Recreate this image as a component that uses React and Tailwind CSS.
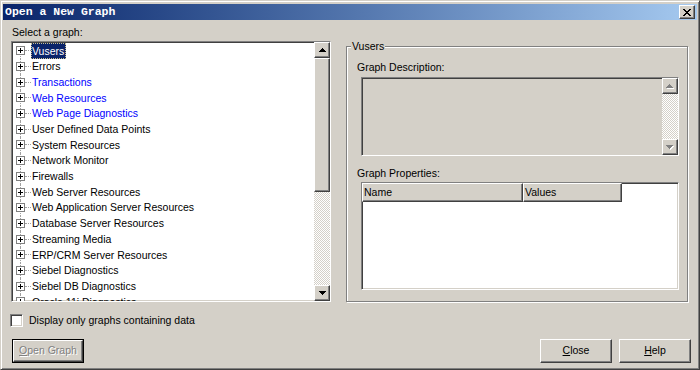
import React from "react";

const raised =
  "border border-t-white border-l-white border-r-[#404040] border-b-[#404040] shadow-[inset_-1px_-1px_0_#808080]";
const sunken =
  "border border-t-[#808080] border-l-[#808080] border-r-white border-b-white shadow-[inset_1px_1px_0_#404040,inset_-1px_-1px_0_#d4d0c8]";
const checker =
  "bg-[repeating-conic-gradient(#ffffff_0%_25%,#d4d0c8_0%_50%)] bg-[length:2px_2px]";

const UP = "M3 0h1v1h1v1h1v1h1v1H0V3h1V2h1V1h1z";
const DOWN = "M0 0h7v1H6v1H5v1H4v1H3V3H2V2H1V1H0z";

function Arrow({ dir, disabled }) {
  const d = dir === "up" ? UP : DOWN;
  if (disabled) {
    return (
      <svg width="8" height="5" viewBox="0 0 8 5">
        <path d={d} fill="#ffffff" transform="translate(1 1)" />
        <path d={d} fill="#808080" />
      </svg>
    );
  }
  return (
    <svg width="7" height="4" viewBox="0 0 7 4">
      <path d={d} fill="#000000" />
    </svg>
  );
}

function ScrollBtn({ dir, disabled }) {
  return (
    <div
      className={`${raised} bg-[#d4d0c8] w-[16px] h-[16px] shrink-0 flex items-center justify-center`}
    >
      <Arrow dir={dir} disabled={disabled} />
    </div>
  );
}

function PlusBox() {
  return (
    <svg width="9" height="9" viewBox="0 0 9 9" className="relative">
      <rect x="0.5" y="0.5" width="8" height="8" fill="#ffffff" stroke="#808080" />
      <path d="M2 4.5h5M4.5 2v5" stroke="#000000" />
    </svg>
  );
}

function CloseX() {
  const px = [
    [0, 0], [1, 0], [6, 0], [7, 0],
    [1, 1], [2, 1], [5, 1], [6, 1],
    [2, 2], [3, 2], [4, 2], [5, 2],
    [3, 3], [4, 3],
    [2, 4], [3, 4], [4, 4], [5, 4],
    [1, 5], [2, 5], [5, 5], [6, 5],
    [0, 6], [1, 6], [6, 6], [7, 6],
  ];
  return (
    <svg width="8" height="7" viewBox="0 0 8 7">
      {px.map(([x, y], i) => (
        <rect key={i} x={x} y={y} width="1" height="1" fill="#000" />
      ))}
    </svg>
  );
}

const items = [
  { t: "Vusers", sel: true },
  { t: "Errors" },
  { t: "Transactions", blue: true },
  { t: "Web Resources", blue: true },
  { t: "Web Page Diagnostics", blue: true },
  { t: "User Defined Data Points" },
  { t: "System Resources" },
  { t: "Network Monitor" },
  { t: "Firewalls" },
  { t: "Web Server Resources" },
  { t: "Web Application Server Resources" },
  { t: "Database Server Resources" },
  { t: "Streaming Media" },
  { t: "ERP/CRM Server Resources" },
  { t: "Siebel Diagnostics" },
  { t: "Siebel DB Diagnostics" },
  { t: "Oracle 11i Diagnostics" },
];

function Button({ children, disabled, isDefault, className = "" }) {
  const inner = (
    <div
      className={`${raised} bg-[#d4d0c8] w-full h-full flex items-center justify-center ${
        disabled ? "text-[#808080] [text-shadow:1px_1px_0_#ffffff]" : "text-black"
      }`}
    >
      {children}
    </div>
  );
  if (isDefault) {
    return (
      <div className={`border border-black w-[72px] h-[24px] ${className}`}>{inner}</div>
    );
  }
  return <div className={`w-[72px] h-[24px] ${className}`}>{inner}</div>;
}

export default function App() {
  return (
    <div
      className="w-[700px] h-[370px] bg-[#d4d0c8] border border-t-[#d4d0c8] border-l-[#d4d0c8] border-r-[#404040] border-b-[#404040] shadow-[inset_1px_1px_0_#ffffff,inset_-1px_-1px_0_#808080] p-[2px] flex flex-col text-[10.5px] text-black overflow-hidden"
      style={{ fontFamily: '"Liberation Sans", Arial, sans-serif' }}
    >
      {/* Title bar */}
      <div className="mt-[1px] h-[16px] shrink-0 flex items-center justify-between pl-[2px] pr-[2px] bg-linear-to-r from-[#0a246a] to-[#a6caf0]">
        <span
          className="text-white font-bold text-[11.5px] leading-[16px]"
          style={{ fontFamily: '"Liberation Mono", "Courier New", monospace' }}
        >
          Open a New Graph
        </span>
        <div className={`${raised} bg-[#d4d0c8] w-[16px] h-[14px] flex items-center justify-center`}>
          <CloseX />
        </div>
      </div>

      {/* Body */}
      <div className="flex-1 flex flex-col pl-[8px] pr-[6px] pt-[5px]">
        <div className="flex">
          {/* Left column */}
          <div className="w-[320px] flex flex-col">
            <div className="h-[14px] leading-[14px] pl-[1px]">Select a graph:</div>
            <div className={`${sunken} bg-white mt-[2px] h-[261px] flex`}>
              <div className="flex-1 overflow-hidden pl-[4px] pt-[1px]">
                {items.map((it, i) => (
                  <div key={it.t} className="flex h-[15.7px] items-center">
                    <div className="relative w-[9px] h-full flex items-center">
                      <div
                        className={`absolute left-[4px] ${
                          i === 0 ? "top-1/2" : "top-0"
                        } bottom-0 border-l border-dotted border-[#a0a0a0]`}
                      />
                      <PlusBox />
                    </div>
                    <div className="w-[6px] border-t border-dotted border-[#a0a0a0]" />
                    <span
                      className={`h-full flex items-center border pr-[1px] whitespace-nowrap leading-none ${
                        it.sel
                          ? "bg-[#0a246a] text-white border-dotted border-[#c8c090]"
                          : it.blue
                          ? "text-[#0000ff] border-transparent"
                          : "text-black border-transparent"
                      }`}
                    >
                      {it.t}
                    </span>
                  </div>
                ))}
              </div>
              <div className="w-[16px] flex flex-col">
                <ScrollBtn dir="up" />
                <div className={`${raised} bg-[#d4d0c8] h-[134px] shrink-0`} />
                <div className={`flex-1 ${checker}`} />
                <ScrollBtn dir="down" />
              </div>
            </div>
          </div>

          {/* Right column group box */}
          <div className="ml-[15px] mt-[21px] w-[342px] h-[256px] relative border border-[#808080] shadow-[1px_1px_0_#ffffff,inset_1px_1px_0_#ffffff] flex flex-col pl-[10px] pr-[8px]">
            <span className="absolute -top-[8px] left-[4px] bg-[#d4d0c8] px-[1px] leading-[14px]">
              Vusers
            </span>
            <div className="mt-[13px] h-[14px] leading-[14px]">Graph Description:</div>
            <div className={`${sunken} bg-[#d4d0c8] ml-[4px] mt-[3px] h-[79px] flex justify-end`}>
              <div className="w-[16px] flex flex-col">
                <ScrollBtn dir="up" disabled />
                <div className={`flex-1 ${checker}`} />
                <ScrollBtn dir="down" disabled />
              </div>
            </div>
            <div className="mt-[10px] h-[14px] leading-[14px]">Graph Properties:</div>
            <div className={`${sunken} bg-white ml-[4px] mt-[2px] h-[108px]`}>
              <div className="flex">
                <div className={`${raised} bg-[#d4d0c8] w-[161px] h-[19px] flex items-center pl-[1px]`}>
                  Name
                </div>
                <div className={`${raised} bg-[#d4d0c8] w-[99px] h-[19px] flex items-center pl-[1px]`}>
                  Values
                </div>
              </div>
            </div>
          </div>
        </div>

        {/* Checkbox */}
        <div className="mt-[12px] h-[13px] flex items-center">
          <div className={`${sunken} bg-white w-[13px] h-[13px] -ml-[1px]`} />
          <span className="ml-[6px] leading-none">Display only graphs containing data</span>
        </div>

        {/* Buttons */}
        <div className="mt-[12px] flex">
          <Button disabled isDefault className="ml-[1px]">
            <span>
              <span className="underline">O</span>pen Graph
            </span>
          </Button>
          <Button className="ml-auto">
            <span>
              <span className="underline">C</span>lose
            </span>
          </Button>
          <Button className="ml-[7px]">
            <span>
              <span className="underline">H</span>elp
            </span>
          </Button>
        </div>
      </div>
    </div>
  );
}
